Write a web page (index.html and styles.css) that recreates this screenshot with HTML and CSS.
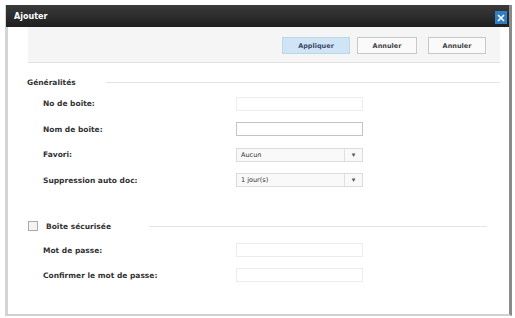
FILE: index.html
```html
<!DOCTYPE html>
<html>
<head>
<meta charset="utf-8">
<link rel="stylesheet" href="styles.css">
</head>
<body>
<div class="dialog">
  <div class="titlebar">
    <span class="title">Ajouter</span>
    <span class="close"><svg width="8" height="8" viewBox="0 0 8 8"><path d="M1 1L7 7M7 1L1 7" stroke="#fff" stroke-width="1.6"/></svg></span>
  </div>
  <div class="body">
    <div class="toolbar">
      <button class="btn primary">Appliquer</button>
      <button class="btn">Annuler</button>
      <button class="btn last">Annuler</button>
    </div>
    <div class="section">
      <div class="section-head">
        <span class="section-title">Généralités</span>
        <span class="rule"></span>
      </div>
      <div class="row"><span class="label">No de boîte:</span><span class="field disabled"></span></div>
      <div class="row"><span class="label">Nom de boîte:</span><span class="field"></span></div>
      <div class="row"><span class="label">Favori:</span><span class="field select"><span class="val">Aucun</span><span class="arrow">▾</span></span></div>
      <div class="row"><span class="label">Suppression auto doc:</span><span class="field select"><span class="val">1 jour(s)</span><span class="arrow">▾</span></span></div>
    </div>
    <div class="section secure">
      <div class="section-head">
        <span class="check"></span>
        <span class="section-title">Boîte sécurisée</span>
        <span class="rule"></span>
      </div>
      <div class="row"><span class="label">Mot de passe:</span><span class="field disabled"></span></div>
      <div class="row"><span class="label">Confirmer le mot de passe:</span><span class="field disabled"></span></div>
    </div>
  </div>
</div>
</body>
</html>
```
FILE: styles.css
```css
html, body { margin: 0; padding: 0; background: #fff; }
body { font-family: "DejaVu Sans", Verdana, sans-serif; color: #333; }
.dialog {
  margin: 5px 3px 0 5px;
  height: 311px;
  border-left: 3px solid #d4d4d4;
  border-right: 3px solid #8a8a8a;
  border-bottom: 2px solid #d0d0d0;
  box-sizing: border-box;
  display: flex;
  flex-direction: column;
  background: #fff;
}
.titlebar {
  height: 22px;
  background: linear-gradient(#3a3a3a, #1f1f1f);
  display: flex;
  align-items: center;
  justify-content: space-between;
  padding: 0 2px 0 8px;
  margin-left: -2px;
}
.title { color: #fff; font-size: 8px; font-weight: bold; }
.close {
  width: 12px; height: 13px;
  background: #2f7fc4;
  display: flex; align-items: center; justify-content: center;
  margin-top: 3px;
}
.body { padding: 0 9px 0 20px; flex: 1; }
.toolbar {
  height: 35px;
  background: #f5f5f5;
  border-bottom: 1px solid #e2e2e2;
  display: flex;
  align-items: center;
  justify-content: flex-end;
  padding-right: 14px;
  gap: 7px;
}
.btn {
  font-family: inherit;
  font-size: 6.5px;
  font-weight: bold;
  color: #444;
  width: 60px;
  height: 17px;
  background: #fafafa;
  border: 1px solid #c8c8c8;
  padding: 0;
  margin: 2px 0 0 0;
}
.btn.primary { background: #cfe4f4; border-color: #bcd6ea; color: #3a4c66; width: 68px; }
.btn.last { margin-left: 4px; width: 58px; }
.section { padding-top: 13px; }
.section-head { display: flex; align-items: center; height: 12px; margin-left: -1px; }
.section-title { font-size: 7.5px; font-weight: bold; color: #333; }
.rule { flex: 1; height: 1px; background: #e4e4e4; margin-left: 30px; margin-right: 0; }
.row { display: flex; align-items: center; height: 13px; margin-top: 12.5px; padding-left: 15px; }
.section-head + .row { margin-top: 9px; }
.label { width: 193px; font-size: 7.5px; font-weight: bold; color: #333; }
.field {
  width: 125px; height: 12px;
  border: 1px solid #c4c4c4;
  background: #fff;
  display: flex; align-items: center;
}
.field.disabled { border-color: #ececec; }
.field.select { border-color: #dcdcdc; background: #f9f9f9; justify-content: space-between; }
.val { font-size: 6.5px; padding-left: 4px; color: #333; }
.arrow { width: 17px; height: 12px; border-left: 1px solid #e0e0e0; font-size: 7px; color: #555; display: flex; align-items: center; justify-content: center; }
.secure { padding-top: 33.5px; }
.secure .section-head { margin-left: 0; }
.secure .row { padding-left: 15px; }
.secure .section-head + .row { margin-top: 11.5px; }
.secure .row + .row { margin-top: 12px; }
.check { width: 8px; height: 8px; border: 1px solid #aaa; background: #f4f4f4; margin-right: 8px; }
.secure .rule { margin-left: 38px; margin-right: 13px; }
```
